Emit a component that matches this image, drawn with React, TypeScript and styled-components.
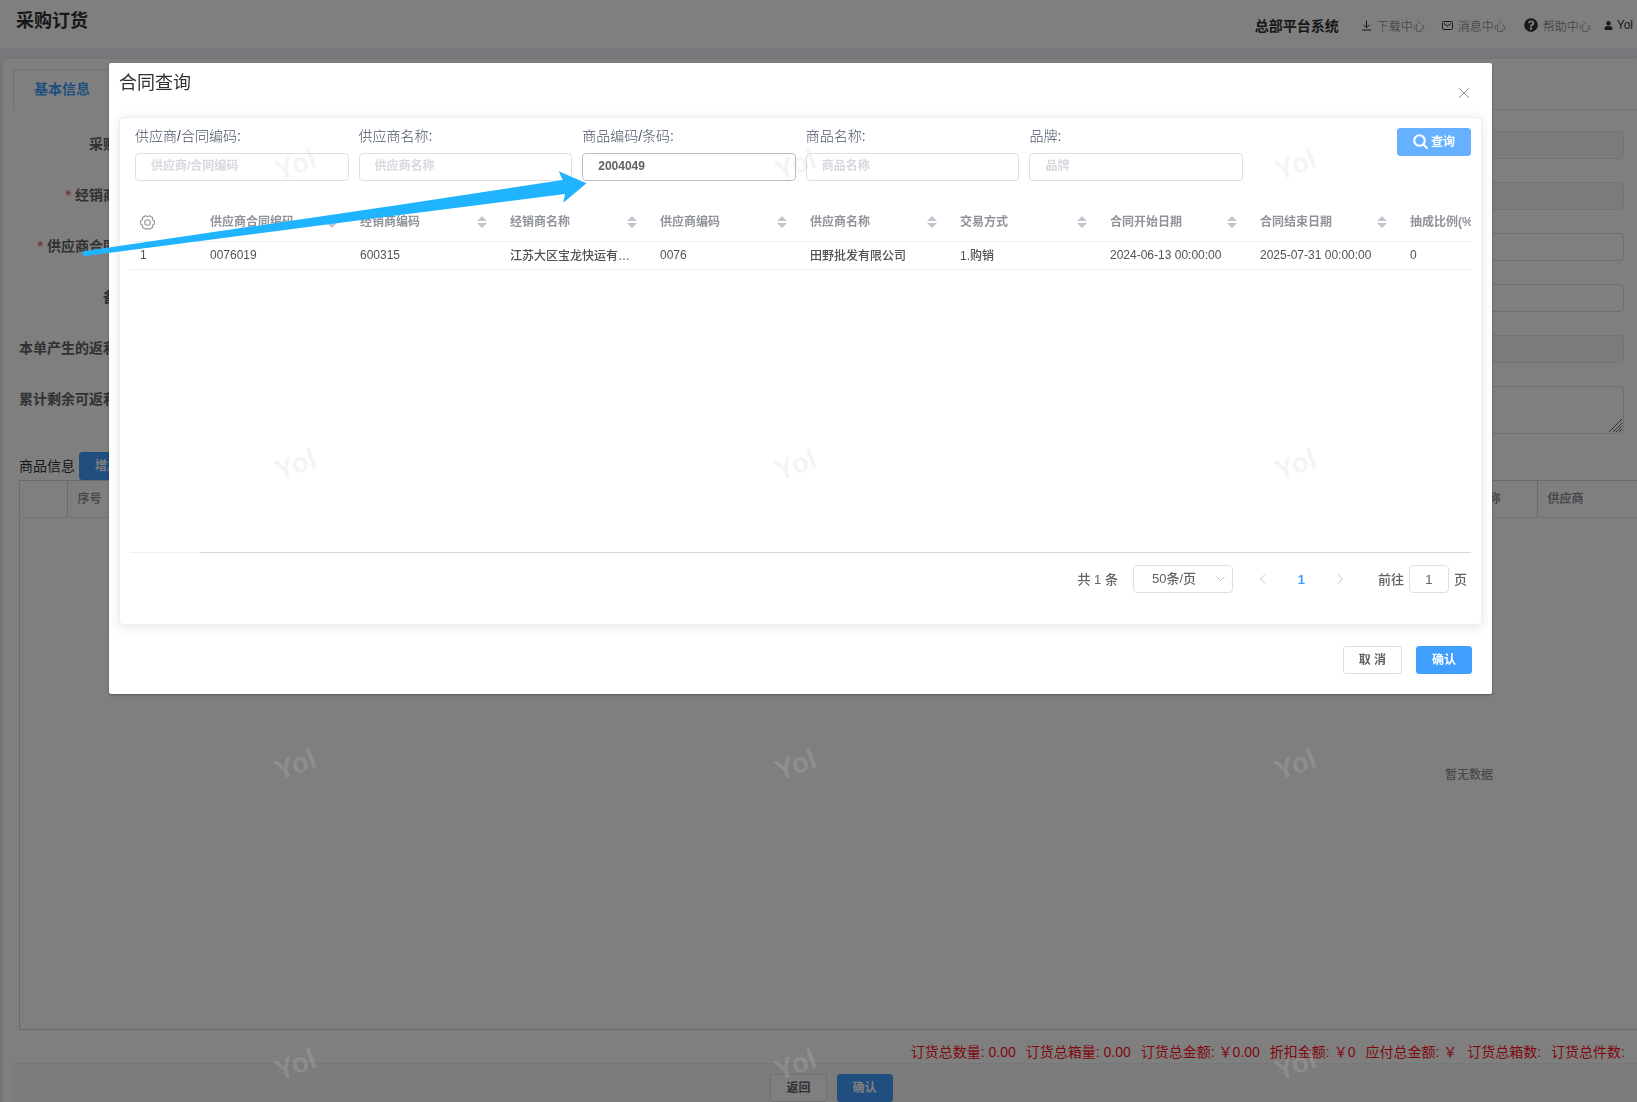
import React from 'react';
import styled, { createGlobalStyle, css } from 'styled-components';
import { FaQuestionCircle, FaUser } from 'react-icons/fa';

const GlobalStyle = createGlobalStyle`
  *, *::before, *::after { box-sizing: border-box; }
  body {
    margin: 0;
    overflow: hidden;
    background: #f0f3f8;
    color: #303133;
    font-family: "Liberation Sans", "Noto Sans CJK SC", sans-serif;
    font-size: 14px;
  }
  button, input, select, textarea { font-family: inherit; margin: 0; }
`;

/* ---------- shared controls ---------- */

const Button = styled.button<{ $kind?: 'primary' | 'light' | 'plain' }>`
  display: inline-flex;
  align-items: center;
  justify-content: center;
  gap: 3px;
  height: 28px;
  padding: 0 15px 1px;
  border: 1px solid #dcdfe6;
  border-radius: 3px;
  background: #fff;
  color: #606266;
  font-size: 12px;
  font-weight: 700;
  line-height: 12px;
  white-space: nowrap;
  cursor: pointer;
  ${({ $kind }) => $kind === 'primary' && css`
    border-color: #409eff;
    background: #409eff;
    color: #fff;
  `}
  ${({ $kind }) => $kind === 'light' && css`
    border-color: #66b1ff;
    background: #66b1ff;
    color: #fff;
  `}
`;

const fieldBox = css`
  width: 100%;
  min-width: 0;
  border: 1px solid #dcdfe6;
  border-radius: 4px;
  background: #fff;
  color: #606266;
  font-size: 12px;
  font-weight: 700;
  outline: none;
`;

const TextInput = styled.input<{ $hovered?: boolean }>`
  ${fieldBox}
  height: 28px;
  padding: 0 15px 3px;
  border-color: ${({ $hovered }) => ($hovered ? '#b8bcc6' : '#dcdfe6')};
  &::placeholder { color: #d6d8de; opacity: 1; }
  &:disabled { background: #f5f7fa; border-color: #e4e7ed; }
`;

const AreaBox = styled.div`
  position: relative;
  width: 100%;
  svg {
    position: absolute;
    right: 2px;
    bottom: 2px;
    pointer-events: none;
  }
`;

const TextArea = styled.textarea`
  ${fieldBox}
  display: block;
  height: 48px;
  padding: 5px 15px;
  resize: none;
`;

/* ---------- page ---------- */

const Page = styled.div`
  display: flex;
  flex-direction: column;
  height: 100vh;
  overflow: hidden;
`;

const TopBar = styled.header`
  display: flex;
  justify-content: space-between;
  height: 48px;
  padding: 0 4px 0 16px;
  background: #fff;
`;

const PageTitle = styled.h1`
  margin: 0;
  font-size: 18px;
  font-weight: 700;
  line-height: 42px;
`;

const TopNav = styled.nav`
  display: flex;
  align-items: center;
  height: 50px;
`;

const SystemName = styled.strong`
  margin-right: 22px;
  font-size: 14px;
`;

const TopLink = styled.a<{ $gap?: number; $dark?: boolean }>`
  display: flex;
  align-items: center;
  gap: ${({ $dark }) => ($dark ? 4 : 5)}px;
  margin-right: ${({ $gap }) => $gap ?? 0}px;
  color: ${({ $dark }) => ($dark ? '#303133' : '#6c6e72')};
  font-size: 12px;
  font-weight: 300;
  text-decoration: none;
  svg { color: #303133; }
`;

const Card = styled.main`
  display: flex;
  flex: 1;
  flex-direction: column;
  min-height: 0;
  margin: 11px 0 0 3px;
  padding: 10px 0 0 10px;
  border-top-left-radius: 4px;
  background: #fff;
  box-shadow: 0 2px 12px rgba(0, 0, 0, 0.1);
`;

const Tabs = styled.div`
  display: flex;
  height: 41px;
  border-bottom: 1px solid #dfe2e8;
`;

const Tab = styled.button`
  height: 41px;
  padding: 0 20px 4px;
  border: 1px solid #dfe2e8;
  border-bottom-color: #fff;
  border-radius: 4px 4px 0 0;
  background: #fff;
  color: #409eff;
  font-size: 14px;
  font-weight: 700;
`;

const OrderForm = styled.form`
  display: grid;
  grid-template-columns: 1fr 1fr;
  gap: 23px 20px;
  padding: 21px 13px 18px 6px;
`;

const FormItem = styled.div`
  display: flex;
  align-items: flex-start;
`;

const FormLabel = styled.label<{ $required?: boolean }>`
  flex: none;
  width: 124px;
  padding-right: 12px;
  color: #606266;
  font-weight: 700;
  line-height: 26px;
  text-align: right;
  white-space: nowrap;
  ${({ $required }) => $required && css`
    &::before { content: '*'; margin-right: 4px; color: #f56c6c; }
  `}
`;

const SectionBar = styled.div`
  display: flex;
  align-items: center;
  gap: 4px;
  padding-left: 6px;
`;

const SectionTitle = styled.h2`
  margin: 0;
  padding-bottom: 3px;
  font-size: 14px;
  font-weight: 400;
`;

const GoodsTable = styled.div`
  flex: 1;
  min-height: 0;
  margin-left: 6px;
  overflow: hidden;
  border: 1px solid #d4d6da;
  border-right: 0;
`;

const GoodsGrid = styled.table`
  width: 2898px;
  height: 100%;
  border-collapse: collapse;
  table-layout: fixed;
  color: #909399;
  font-size: 12px;
  th {
    height: 36px;
    padding: 0 10px 3px;
    border-right: 1px solid #d4d6da;
    border-bottom: 1px solid #e6e8ee;
    font-weight: 700;
    text-align: left;
  }
  td { padding: 0; font-weight: 500; text-align: center; }
`;

const Summary = styled.div`
  display: flex;
  justify-content: flex-end;
  gap: 10px;
  height: 33px;
  padding: 6px 12px 0 0;
  color: #ff1020;
  line-height: 33px;
  white-space: nowrap;
`;

const PageFooter = styled.footer`
  display: flex;
  justify-content: center;
  gap: 10px;
  width: 100vw;
  padding-top: 10px;
  border-top: 1px solid #f0f0f0;
  background: #f9f9f9;
`;

/* ---------- dialog ---------- */

const Mask = styled.div`
  position: fixed;
  inset: 0;
  padding: 63px 145px 0 109px;
  background: rgba(0, 0, 0, 0.5);
`;

const Dialog = styled.section`
  padding: 0 10px 20px;
  border-radius: 2px;
  background: #fff;
  box-shadow: 0 1px 3px rgba(0, 0, 0, 0.3);
`;

const DialogHead = styled.div`
  display: flex;
  justify-content: space-between;
  height: 54px;
`;

const DialogTitle = styled.h2`
  margin: 0;
  font-size: 18px;
  font-weight: 400;
  line-height: 40px;
`;

const CloseButton = styled.button`
  display: flex;
  align-items: center;
  justify-content: center;
  width: 16px;
  height: 60px;
  margin-right: 10px;
  padding: 0;
  border: 0;
  background: none;
  color: #909399;
`;

const Panel = styled.div`
  padding: 10px 10px 31px;
  border: 1px solid #ebeef5;
  border-radius: 4px;
  background: #fff;
  box-shadow: 0 2px 12px rgba(0, 0, 0, 0.1);
`;

const SearchRow = styled.form`
  display: flex;
  align-items: flex-start;
  justify-content: space-between;
  margin-bottom: 20px;
`;

const SearchFields = styled.div`
  display: grid;
  grid-template-columns: repeat(5, 1fr);
  gap: 10px;
  width: 83%;
  padding-left: 5px;
`;

const SearchLabel = styled.label`
  display: block;
  height: 25px;
  color: #4a5468;
  font-size: 14px;
  font-weight: 300;
  line-height: 16px;
`;

const ResultArea = styled.div`
  height: 351px;
  overflow: hidden;
`;

const ResultTable = styled.table`
  width: 1420px;
  border-collapse: separate;
  border-spacing: 0;
  table-layout: fixed;
  font-size: 12px;
  th, td {
    padding: 0 10px;
    border-bottom: 1px solid #ebeef5;
    text-align: left;
    white-space: nowrap;
  }
  th { height: 41px; padding-top: 2px; color: #909399; font-weight: 700; }
  td {
    height: 28px;
    padding-bottom: 2px;
    overflow: hidden;
    color: #505256;
    font-weight: 500;
    text-overflow: ellipsis;
  }
`;

const HeadCell = styled.div`
  display: flex;
  align-items: center;
  justify-content: space-between;
  padding-right: 3px;
  line-height: 18px;
`;

const ScrollLine = styled.div`
  height: 1px;
  margin-left: 70px;
  background: #d8d8d8;
`;

const ScrollTrack = styled.div`
  background: #ebeef5;
`;

const Pagination = styled.nav`
  display: flex;
  align-items: center;
  justify-content: flex-end;
  margin-top: 12px;
  padding-right: 4px;
  color: #606266;
  font-size: 13px;
  font-weight: 500;
`;

const PageText = styled.span`
  padding-bottom: 2px;
`;

const PageSize = styled.div`
  position: relative;
  width: 100px;
  margin: 0 10px 0 15px;
  svg {
    position: absolute;
    top: 11px;
    right: 8px;
    color: #c0c4cc;
    pointer-events: none;
  }
`;

const Select = styled.select`
  ${fieldBox}
  height: 28px;
  padding: 0 0 1px 18px;
  appearance: none;
  font-size: 13px;
  font-weight: 500;
`;

const Pager = styled.button<{ $active?: boolean }>`
  display: flex;
  align-items: center;
  justify-content: center;
  width: 39px;
  height: 28px;
  padding: 0;
  border: 0;
  background: none;
  color: ${({ $active }) => ($active ? '#409eff' : '#c0c4cc')};
  font-size: 13px;
  font-weight: 700;
`;

const JumpLabel = styled.label`
  display: flex;
  align-items: center;
  gap: 5px;
  margin-left: 18px;
`;

const JumpInput = styled.input`
  ${fieldBox}
  width: 40px;
  height: 28px;
  padding: 0;
  font-size: 13px;
  font-weight: 500;
  text-align: center;
`;

const DialogFoot = styled.div`
  display: flex;
  justify-content: flex-end;
  gap: 14px;
  padding: 21px 10px 0 0;
`;

/* ---------- overlays ---------- */

const Arrow = styled.svg`
  position: fixed;
  top: 170px;
  left: 82px;
  pointer-events: none;
`;

const Watermarks = styled.div`
  position: fixed;
  inset: 0;
  display: grid;
  grid-template-columns: repeat(3, 500px);
  grid-auto-rows: 300px;
  padding: 15px 0 0 46px;
  overflow: hidden;
  pointer-events: none;
`;

const Mark = styled.span`
  place-self: center;
  color: rgba(200, 200, 200, 0.2);
  font-size: 28px;
  font-weight: 700;
  transform: rotate(-20deg);
`;

/* ---------- icons ---------- */

const DownloadIcon = () => (
  <svg width="11" height="11" viewBox="0 0 11 11" fill="none" stroke="currentColor">
    <path d="M5.5 0.5v7M2.5 4.8l3 3 3-3M1 10h9" />
  </svg>
);

const MailIcon = () => (
  <svg width="11" height="11" viewBox="0 0 11 11" fill="none" stroke="currentColor">
    <rect x="0.5" y="1.5" width="10" height="8" rx="1" />
    <path d="M2 3.500l3.500 2.500L9 3.500" />
  </svg>
);

const SearchIcon = () => (
  <svg width="15" height="15" viewBox="0 0 15 15" fill="none" stroke="currentColor" strokeWidth="2" strokeLinecap="round">
    <circle cx="6.5" cy="6.500" r="5.300" />
    <path d="M10.500 10.500L14 14" />
  </svg>
);

const CloseIcon = () => (
  <svg width="12" height="12" viewBox="0 0 12 12" fill="none" stroke="currentColor">
    <path d="M1 1l10 10M11 1L1 11" />
  </svg>
);

const GripIcon = () => (
  <svg width="13" height="13" viewBox="0 0 13 13" fill="none" stroke="#606266">
    <path d="M0 13L13 0M4 13L13 4M7 13L13 7M10 13L13 10" />
  </svg>
);

const ChevronIcon = ({ d, w, h }: { d: string; w: number; h: number }) => (
  <svg width={w} height={h} viewBox={`0 0 ${w} ${h}`} fill="none" stroke="currentColor">
    <path d={d} />
  </svg>
);

const SortIcon = () => (
  <svg width="10" height="12" viewBox="0 0 10 12" fill="#c0c4cc">
    <path d="M5 0l5 5H0zM5 12l5-5H0z" />
  </svg>
);

const gearPoints = Array.from({ length: 6 }, (_, i) => i * 60)
  .flatMap((a) => [[a - 15, 6.6], [a + 15, 6.6], [a + 30, 5.3]])
  .map(([a, r]) => {
    const t = (a * Math.PI) / 180;
    return `${(7 + r * Math.cos(t)).toFixed(2)},${(7 + r * Math.sin(t)).toFixed(2)}`;
  })
  .join(' ');

const GearIcon = () => (
  <svg width="15" height="15" viewBox="0 0 14 14" fill="none" stroke="#909399" strokeLinejoin="round">
    <polygon points={gearPoints} />
    <circle cx="7" cy="7" r="2.6" />
  </svg>
);

/* ---------- data ---------- */

type OrderField = { id: string; label: string; required?: boolean; disabled?: boolean; area?: boolean };

const orderFields: OrderField[][] = [
  [{ id: 'buyer', label: '采购人', disabled: true }, { id: 'date', label: '订货日期', disabled: true }],
  [{ id: 'dealer', label: '经销商名', required: true }, { id: 'dealerName', label: '经销商', disabled: true }],
  [{ id: 'contract', label: '供应商合同号', required: true }, { id: 'supplier', label: '供应商' }],
  [{ id: 'province', label: '备注' }, { id: 'address', label: '地址' }],
  [{ id: 'rebate', label: '本单产生的返利额' }, { id: 'rebateUsed', label: '使用返利', disabled: true }],
  [{ id: 'rebateLeft', label: '累计剩余可返利额' }, { id: 'note', label: '说明', area: true }],
];

const searchFields = [
  { id: 'q-contract', label: '供应商/合同编码:', placeholder: '供应商/合同编码' },
  { id: 'q-supplier', label: '供应商名称:', placeholder: '供应商名称' },
  { id: 'q-code', label: '商品编码/条码:', placeholder: '商品编码/条码', value: '2004049' },
  { id: 'q-goods', label: '商品名称:', placeholder: '商品名称' },
  { id: 'q-brand', label: '品牌:', placeholder: '品牌' },
];

const columns = ['供应商合同编码', '经销商编码', '经销商名称', '供应商编码', '供应商名称', '交易方式', '合同开始日期', '合同结束日期', '抽成比例(%)'];

const rows = [
  ['0076019', '600315', '江苏大区宝龙快运有限公司', '0076', '田野批发有限公司', '1.购销', '2024-06-13 00:00:00', '2025-07-31 00:00:00', '0'],
];

const goodsColumns = [
  { name: '', width: 47 },
  { name: '序号', width: 60 },
  { name: '商品编码', width: 1303 },
  { name: '经销商名称', width: 107 },
  { name: '供应商', width: 1381 },
];

const totals = ['订货总数量: 0.00', '订货总箱量: 0.00', '订货总金额: ￥0.00', '折扣金额: ￥0', '应付总金额: ￥', '订货总箱数:', '订货总件数:'];

export default function App() {
  return (
    <>
      <GlobalStyle />
      <Page>
        <TopBar>
          <PageTitle>采购订货</PageTitle>
          <TopNav>
            <SystemName>总部平台系统</SystemName>
            <TopLink href="#download" $gap={17}><DownloadIcon />下载中心</TopLink>
            <TopLink href="#messages" $gap={18}><MailIcon />消息中心</TopLink>
            <TopLink href="#help" $gap={13}><FaQuestionCircle size={14} />帮助中心</TopLink>
            <TopLink href="#user" $dark><FaUser size={9} />Yol</TopLink>
          </TopNav>
        </TopBar>
        <Card>
          <Tabs><Tab type="button">基本信息</Tab></Tabs>
          <OrderForm>
            {orderFields.flat().map((f) => (
              <FormItem key={f.id}>
                <FormLabel htmlFor={f.id} $required={f.required}>{f.label}</FormLabel>
                {f.area
                  ? <AreaBox><TextArea id={f.id} /><GripIcon /></AreaBox>
                  : <TextInput id={f.id} disabled={f.disabled} />}
              </FormItem>
            ))}
          </OrderForm>
          <SectionBar>
            <SectionTitle>商品信息</SectionTitle>
            <Button type="button" $kind="primary">增加</Button>
          </SectionBar>
          <GoodsTable>
            <GoodsGrid>
              <colgroup>
                {goodsColumns.map((c) => <col key={c.name} style={{ width: c.width }} />)}
              </colgroup>
              <thead>
                <tr>{goodsColumns.map((c) => <th key={c.name}>{c.name}</th>)}</tr>
              </thead>
              <tbody>
                <tr><td colSpan={goodsColumns.length}>暂无数据</td></tr>
              </tbody>
            </GoodsGrid>
          </GoodsTable>
          <Summary>{totals.map((t) => <span key={t}>{t}</span>)}</Summary>
          <PageFooter>
            <Button type="button">返回</Button>
            <Button type="button" $kind="primary">确认</Button>
          </PageFooter>
        </Card>
      </Page>

      <Mask>
        <Dialog role="dialog" aria-labelledby="dialog-title">
          <DialogHead>
            <DialogTitle id="dialog-title">合同查询</DialogTitle>
            <CloseButton type="button" aria-label="关闭"><CloseIcon /></CloseButton>
          </DialogHead>
          <Panel>
            <SearchRow>
              <SearchFields>
                {searchFields.map((f) => (
                  <div key={f.id}>
                    <SearchLabel htmlFor={f.id}>{f.label}</SearchLabel>
                    <TextInput id={f.id} placeholder={f.placeholder} defaultValue={f.value} $hovered={!!f.value} />
                  </div>
                ))}
              </SearchFields>
              <Button type="button" $kind="light"><SearchIcon />查询</Button>
            </SearchRow>
            <ResultArea>
              <ResultTable>
                <colgroup>
                  <col style={{ width: 70 }} />
                  {columns.map((c) => <col key={c} style={{ width: 150 }} />)}
                </colgroup>
                <thead>
                  <tr>
                    <th><HeadCell><GearIcon /></HeadCell></th>
                    {columns.map((c) => (
                      <th key={c}><HeadCell>{c}<SortIcon /></HeadCell></th>
                    ))}
                  </tr>
                </thead>
                <tbody>
                  {rows.map((r, i) => (
                    <tr key={r[0]}>
                      <td>{i + 1}</td>
                      {r.map((v, j) => <td key={columns[j]}>{v}</td>)}
                    </tr>
                  ))}
                </tbody>
              </ResultTable>
            </ResultArea>
            <ScrollTrack><ScrollLine /></ScrollTrack>
            <Pagination>
              <PageText>共 1 条</PageText>
              <PageSize>
                <Select aria-label="每页条数"><option>50条/页</option></Select>
                <ChevronIcon w={9} h={6} d="M0.5 0.5l4 4 4-4" />
              </PageSize>
              <Pager type="button" aria-label="上一页"><ChevronIcon w={7} h={10} d="M6 0.5L1.5 5 6 9.5" /></Pager>
              <Pager type="button" $active>1</Pager>
              <Pager type="button" aria-label="下一页"><ChevronIcon w={7} h={10} d="M1 0.5L5.5 5 1 9.5" /></Pager>
              <JumpLabel>
                <PageText>前往</PageText>
                <JumpInput defaultValue="1" />
                <PageText>页</PageText>
              </JumpLabel>
            </Pagination>
          </Panel>
          <DialogFoot>
            <Button type="button">取 消</Button>
            <Button type="button" $kind="primary">确认</Button>
          </DialogFoot>
        </Dialog>
      </Mask>

      <Arrow width="506" height="90" viewBox="82 170 506 90" fill="#20b4ff" aria-hidden="true">
        <path d="M85 251L400 204.700 562.700 180 558.700 171.300 586.500 183.300 563.300 202.700 565 194 400 215 85 256Q82.500 256 82.500 253.500T85 251z" />
      </Arrow>

      <Watermarks aria-hidden="true">
        {Array.from({ length: 12 }, (_, i) => <Mark key={i}>Yol</Mark>)}
      </Watermarks>
    </>
  );
}
